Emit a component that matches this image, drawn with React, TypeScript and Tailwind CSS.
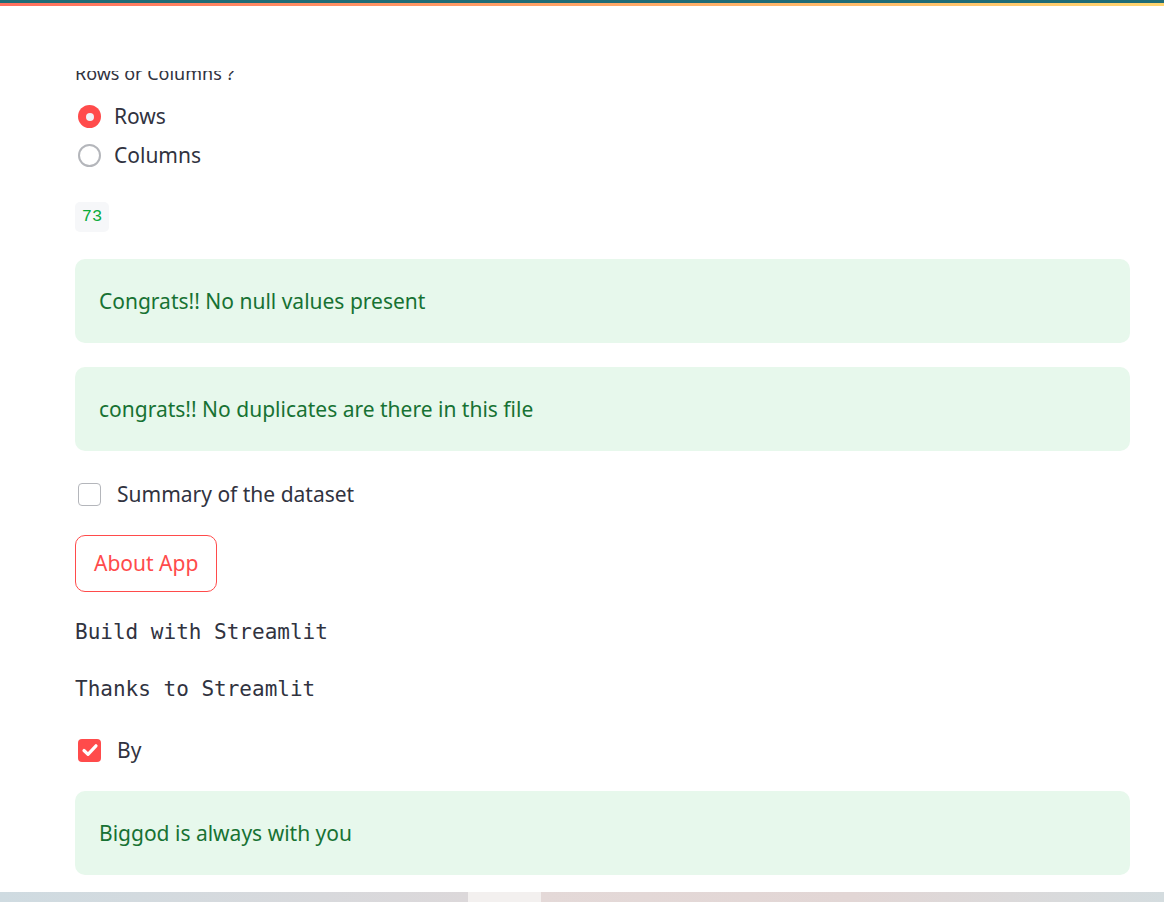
import React from "react";

const sans = { fontFamily: "'Noto Sans', 'Open Sans', sans-serif" };

function Radio({ checked, label }: { checked: boolean; label: string }) {
  return (
    <div className="flex h-[39px] items-center">
      <div className="ml-[3px] flex h-[23px] w-[23px] items-center justify-center">
        {checked ? (
          <div className="flex h-[23px] w-[23px] items-center justify-center rounded-full bg-[#ff4b4b]">
            <div className="h-[8px] w-[8px] rounded-full bg-[#f0f2f6]" />
          </div>
        ) : (
          <div className="h-[23px] w-[23px] rounded-full border-2 border-[#b4b6bb] bg-white" />
        )}
      </div>
      <span className="ml-[13px] text-[21px] leading-[33px] text-[#31333f]">{label}</span>
    </div>
  );
}

function Checkbox({ checked, label }: { checked: boolean; label: string }) {
  return (
    <div className="flex h-[24px] items-center">
      {checked ? (
        <div className="ml-[3px] flex h-[23px] w-[23px] items-center justify-center rounded-[4px] bg-[#ff4b4b]">
          <svg width="18" height="18" viewBox="0 0 18 18" fill="none">
            <path d="M3 9.5 L7 13.3 L15 4.8" stroke="#fff" strokeWidth="3.2" strokeLinecap="round" strokeLinejoin="round" />
          </svg>
        </div>
      ) : (
        <div className="ml-[3px] h-[23px] w-[23px] rounded-[4px] border border-[#b4b6bb] bg-white" />
      )}
      <span className="ml-[16px] text-[21px] leading-[33px] text-[#31333f]">{label}</span>
    </div>
  );
}

function Success({ text, className }: { text: string; className?: string }) {
  return (
    <div className={`flex h-[84px] items-center rounded-[10px] bg-[#e7f8ec] px-[24px] ${className ?? ""}`}>
      <span className="text-[21px] leading-[33px] text-[#177233]">{text}</span>
    </div>
  );
}

export default function App() {
  return (
    <div className="relative h-[902px] w-[1164px] overflow-hidden bg-white" style={sans}>
      <div className="h-[3px] bg-[#1f6c76]" />
      <div className="h-[3px] bg-gradient-to-r from-[#ff6f5e] to-[#ffd56f]" />
      <div className="h-[65px] bg-white" />
      <div className="h-[821px] overflow-hidden pl-[75px] pr-[34px]">
        <div className="-mt-[10px] text-[18px] leading-[24px] text-[#31333f]">Rows or Columns ?</div>
        <div className="mt-[12px] flex flex-col">
          <Radio checked label="Rows" />
          <Radio checked={false} label="Columns" />
        </div>
        <div className="mt-[27px] flex h-[30px] w-[34px] items-center justify-center rounded-[5px] bg-[#f6f7f9]">
          <span className="text-[17px] text-[#09ab3b]" style={{ fontFamily: "'Liberation Mono', monospace" }}>73</span>
        </div>
        <Success className="mt-[27px]" text="Congrats!! No null values present" />
        <Success className="mt-[24px]" text="congrats!! No duplicates are there in this file" />
        <div className="mt-[31px]">
          <Checkbox checked={false} label="Summary of the dataset" />
        </div>
        <button className="mt-[29px] flex h-[57px] items-center rounded-[10px] border border-[#ff4b4b] bg-white px-[18px] text-[21px] text-[#ff4b4b]">
          About App
        </button>
        <div className="mt-[24px] text-[21px] leading-[33px] text-[#31333f]" style={{ fontFamily: "'DejaVu Sans Mono', monospace" }}>
          Build with Streamlit
        </div>
        <div className="mt-[24px] text-[21px] leading-[33px] text-[#31333f]" style={{ fontFamily: "'DejaVu Sans Mono', monospace" }}>
          Thanks to Streamlit
        </div>
        <div className="mt-[32px]">
          <Checkbox checked label="By" />
        </div>
        <Success className="mt-[29px]" text="Biggod is always with you" />
      </div>
      <div className="absolute bottom-0 left-0 flex h-[10px] w-full">
        <div className="h-full w-[468px] bg-gradient-to-r from-[#cfdbe1] to-[#dcd8da]" />
        <div className="h-full w-[73px] bg-[#f3f0ef]" />
        <div className="h-full flex-1 bg-gradient-to-r from-[#e4d9d8] via-[#e2d6d5] to-[#d4dcdf]" />
      </div>
    </div>
  );
}
